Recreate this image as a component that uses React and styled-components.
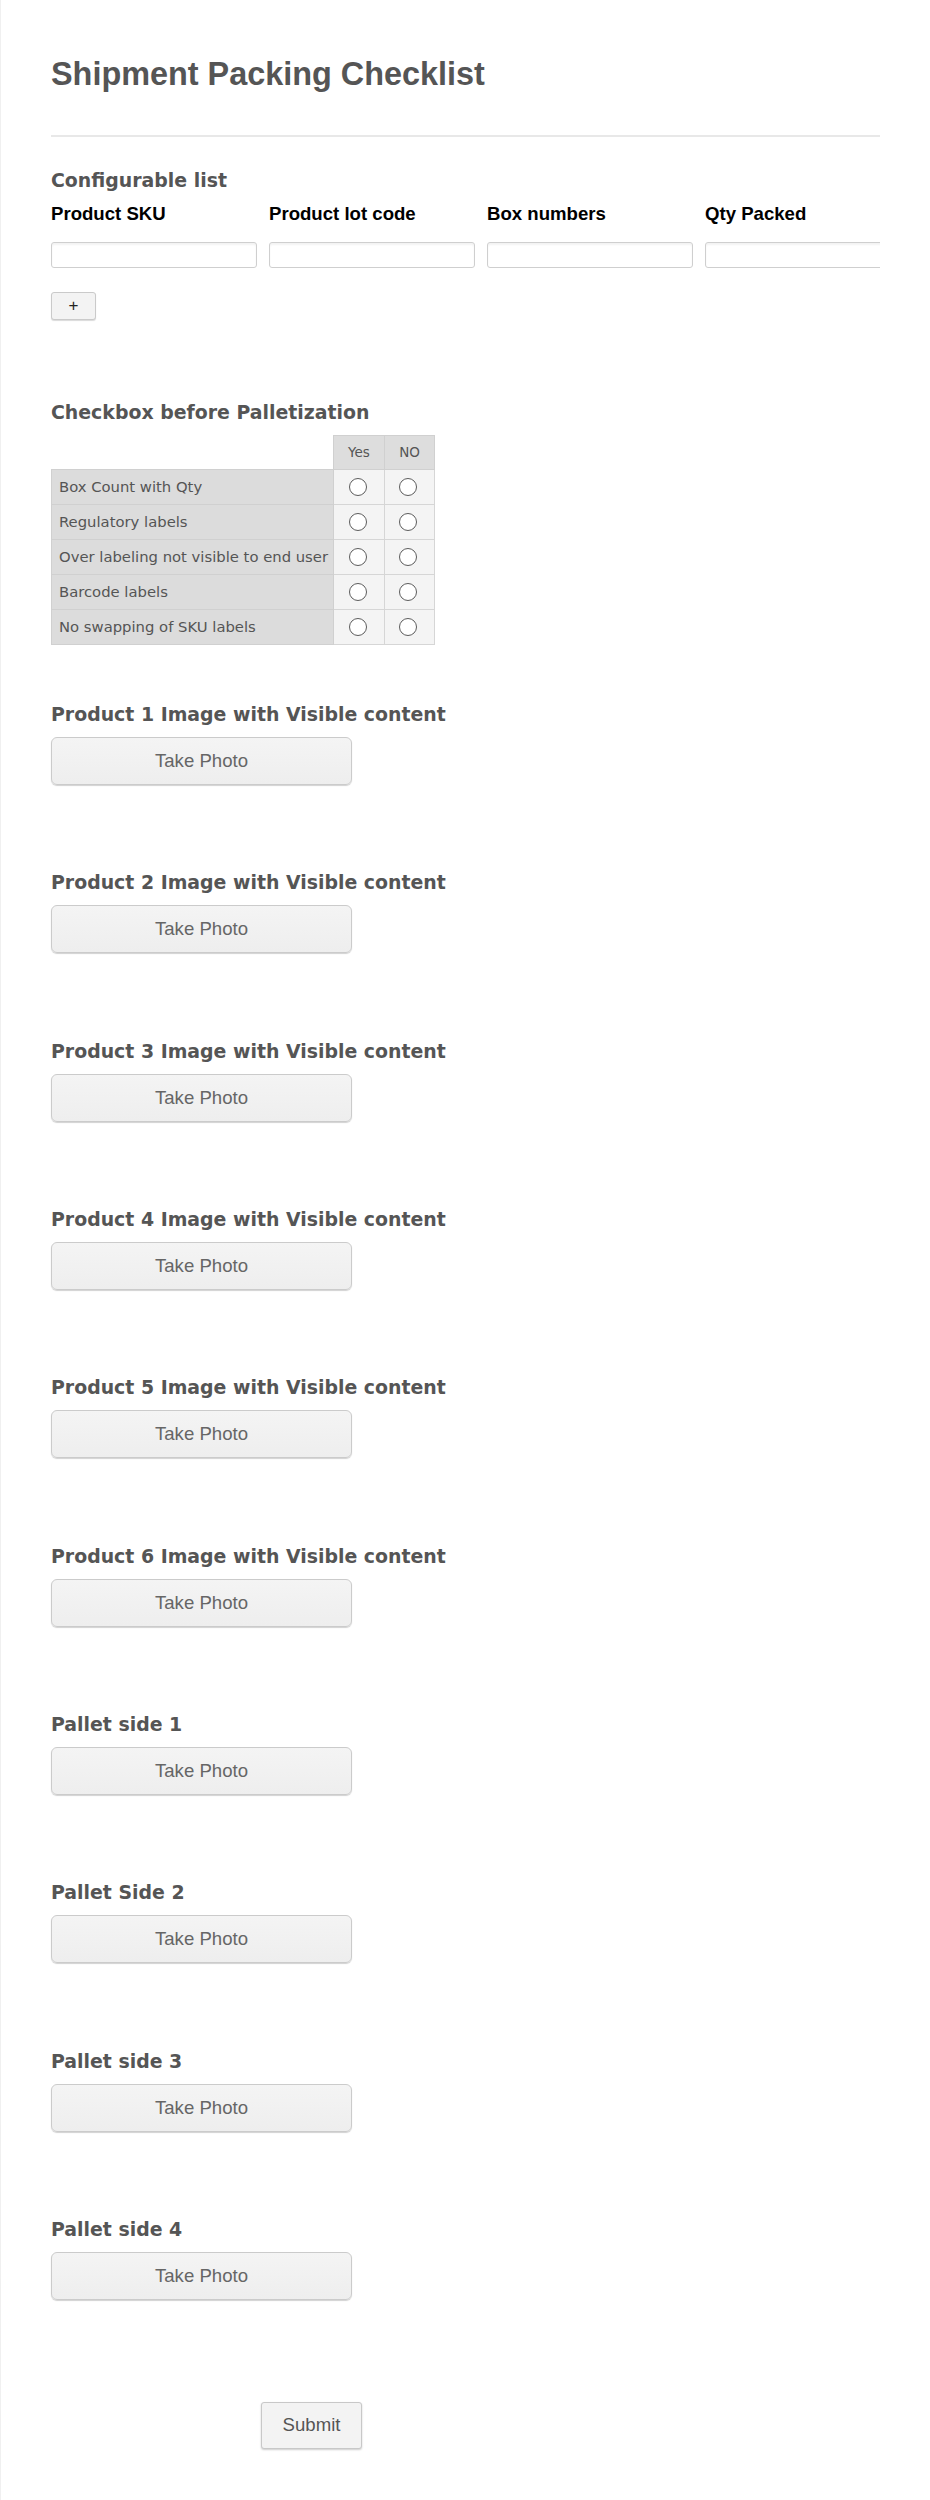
import React from 'react'
import styled, { createGlobalStyle } from 'styled-components'

const GlobalStyle = createGlobalStyle`
  html, body {
    margin: 0;
    padding: 0;
    background: #fff;
  }
  body {
    font-family: "Liberation Sans", Arial, sans-serif;
  }
  * {
    box-sizing: border-box;
  }
`

const Page = styled.div`
  min-height: 2500px;
  border-left: 1px solid #f0f0f0;
  padding: 55px 50px 60px 50px;
`

const Title = styled.h1`
  margin: 0;
  font: bold 32.4px/38px "Liberation Sans", Arial, sans-serif;
  color: #555;
`

const Divider = styled.hr`
  margin: 42px 0 0;
  border: 0;
  height: 2px;
  background: #e8e8e8;
`

const FieldLabel = styled.div`
  margin-top: ${props => props.$top || 0}px;
  font: bold 18.9px/22px "DejaVu Sans", Verdana, sans-serif;
  color: #555;
`

const ListClip = styled.div`
  margin-top: 12.6px;
  overflow: hidden;
`

const ListGrid = styled.div`
  display: grid;
  grid-template-columns: repeat(4, 206px);
  column-gap: 12px;
  row-gap: 16.4px;
  width: 860px;
`

const ColumnName = styled.div`
  font: bold 18.6px/22px "Liberation Sans", Arial, sans-serif;
  color: #000;
  white-space: nowrap;
`

const TextInput = styled.input`
  height: 26px;
  width: 100%;
  border: 1px solid #cfcfcf;
  border-radius: 3px;
  background: #fff;
  box-shadow: inset 0 2px 2px rgba(0, 0, 0, 0.05);
  outline: none;
`

const AddButton = styled.button`
  display: block;
  margin-top: 24px;
  width: 45px;
  height: 28px;
  border: 1px solid #cacaca;
  border-radius: 3px;
  background: #f3f3f3;
  box-shadow: 0 1px 1px rgba(0, 0, 0, 0.15);
  font: 17px/1 "Liberation Sans", Arial, sans-serif;
  color: #222;
  padding: 0;
`

const Matrix = styled.table`
  margin-top: 11.4px;
  border-collapse: collapse;
  width: 383px;
  font-family: "DejaVu Sans", Verdana, sans-serif;
  color: #555;
  table-layout: fixed;
`

const HeadCell = styled.th`
  height: 34px;
  width: ${props => props.$w}px;
  padding: 0;
  font-weight: normal;
  font-size: 13.5px;
  text-align: center;
  background: ${props => (props.$blank ? 'transparent' : '#dddddd')};
  border: ${props => (props.$blank ? '0' : '1px solid #d0d0d0')};
`

const RowLabel = styled.td`
  height: 35px;
  padding: 0 0 0 7px;
  font-size: 14.8px;
  white-space: nowrap;
  background: #dcdcdc;
  border: 1px solid #d0d0d0;
`

const RadioCell = styled.td`
  padding: 0;
  text-align: center;
  background: #f4f4f4;
  border: 1px solid #d6d6d6;
`

const Radio = styled.span`
  display: inline-block;
  vertical-align: middle;
  width: 18px;
  height: 18px;
  border: 1px solid #5c5c5c;
  border-radius: 50%;
  background: #fff;
  margin-right: 3px;
`

const PhotoField = styled.div`
  margin-top: ${props => props.$top}px;
`

const PhotoButton = styled.button`
  display: block;
  margin-top: 12px;
  width: 301px;
  height: 48px;
  border: 1px solid #cbcbcb;
  border-radius: 6px;
  background: linear-gradient(#f4f4f4, #eeeeee);
  box-shadow: 0 1px 1px rgba(0, 0, 0, 0.18);
  font: 18.6px "Liberation Sans", Arial, sans-serif;
  color: #666;
  padding: 0;
`

const SubmitButton = styled.button`
  display: block;
  margin: 101.7px 0 0 210px;
  width: 101px;
  height: 47px;
  border: 1px solid #c8c8c8;
  border-radius: 3px;
  background: #f3f3f3;
  box-shadow: 0 1px 2px rgba(0, 0, 0, 0.2);
  font: 18.6px "Liberation Sans", Arial, sans-serif;
  color: #555;
  padding: 0;
`

const columns = ['Product SKU', 'Product lot code', 'Box numbers', 'Qty Packed']

const checks = [
  'Box Count with Qty',
  'Regulatory labels',
  'Over labeling not visible to end user',
  'Barcode labels',
  'No swapping of SKU labels'
]

const photos = [
  'Product 1 Image with Visible content',
  'Product 2 Image with Visible content',
  'Product 3 Image with Visible content',
  'Product 4 Image with Visible content',
  'Product 5 Image with Visible content',
  'Product 6 Image with Visible content',
  'Pallet side 1',
  'Pallet Side 2',
  'Pallet side 3',
  'Pallet side 4'
]

export default function App() {
  return (
    <Page>
      <GlobalStyle />
      <Title>Shipment Packing Checklist</Title>
      <Divider />

      <FieldLabel $top={31.6}>Configurable list</FieldLabel>
      <ListClip>
        <ListGrid>
          {columns.map(c => <ColumnName key={c}>{c}</ColumnName>)}
          {columns.map(c => <TextInput key={c} type='text' name={c} />)}
        </ListGrid>
      </ListClip>
      <AddButton type='button'>+</AddButton>

      <FieldLabel $top={81.6}>Checkbox before Palletization</FieldLabel>
      <Matrix>
        <thead>
          <tr>
            <HeadCell $w={282} $blank />
            <HeadCell $w={51}>Yes</HeadCell>
            <HeadCell $w={50}>NO</HeadCell>
          </tr>
        </thead>
        <tbody>
          {checks.map(item => (
            <tr key={item}>
              <RowLabel>{item}</RowLabel>
              <RadioCell><Radio /></RadioCell>
              <RadioCell><Radio /></RadioCell>
            </tr>
          ))}
        </tbody>
      </Matrix>

      {photos.map((p, i) => (
        <PhotoField key={p} $top={i === 0 ? 58.6 : 86.3}>
          <FieldLabel>{p}</FieldLabel>
          <PhotoButton type='button'>Take Photo</PhotoButton>
        </PhotoField>
      ))}

      <SubmitButton type='submit'>Submit</SubmitButton>
    </Page>
  )
}
